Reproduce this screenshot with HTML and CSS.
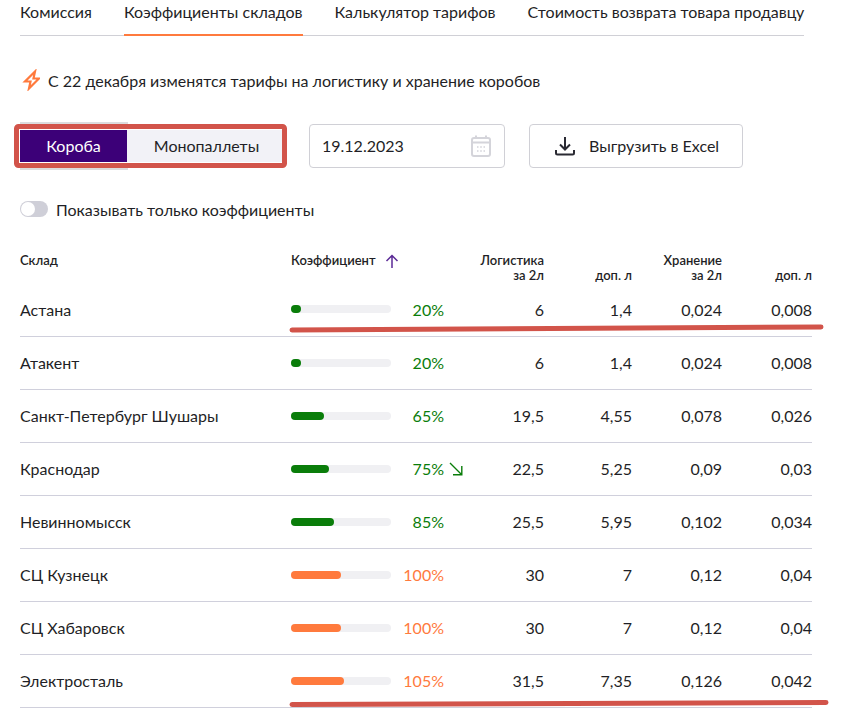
FILE: index.html
```html
<!DOCTYPE html>
<html lang="en">

<head>
    <meta charset="UTF-8" />
    <title>Коэффициенты складов</title>
    <link rel="stylesheet" href="styles.css">
</head>

<body>
    <div class="page">
        <div class="tabs">
            <a class="tab">Комиссия</a>
            <a class="tab tab-active">Коэффициенты складов</a>
            <a class="tab">Калькулятор тарифов</a>
            <a class="tab">Стоимость возврата товара продавцу</a>
        </div>

        <div class="notice">
            <svg class="notice-icon" width="20" height="22" viewBox="0 0 20 22" fill="none" stroke="#ff7a3d" stroke-width="2.2" stroke-linejoin="miter">
                <path d="M15 2.5 L5 12.5 H10.5 L9 19.5 L19 9.5 H13.5 Z" />
            </svg>
            <span>С 22 декабря изменятся тарифы на логистику и хранение коробов</span>
        </div>

        <div class="controls">
            <div class="switcher">
                <button class="switch-btn switch-active">Короба</button>
                <button class="switch-btn switch-idle">Монопаллеты</button>
            </div>
            <div class="date-field">
                <span>19.12.2023</span>
                <svg width="20" height="22" viewBox="0 0 20 22" fill="none" stroke="#d4d4da" stroke-width="2">
                    <rect x="1" y="3" width="18" height="18" rx="2" />
                    <path d="M1 7.5 H19 M5 0.5 V4 M15 0.5 V4" />
                    <path d="M6 12 H7.5 M9.2 12 H10.8 M12.5 12 H14 M6 16 H7.5 M9.2 16 H10.8 M12.5 16 H14" stroke-width="1.4" />
                </svg>
            </div>
            <button class="excel-btn">
                <svg width="20" height="20" viewBox="0 0 20 20" fill="none" stroke="#2a2a33" stroke-width="2">
                    <path d="M10 1 V13 M5 8.5 L10 13.5 L15 8.5" />
                    <path d="M1 14 V17 Q1 18.5 2.5 18.5 H17.5 Q19 18.5 19 17 V14" />
                </svg>
                <span>Выгрузить в Excel</span>
            </button>
        </div>

        <div class="toggle-row">
            <span class="toggle"><span class="toggle-knob"></span></span>
            <span>Показывать только коэффициенты</span>
        </div>

        <table class="rates">
            <colgroup>
                <col class="col-name">
                <col class="col-rate">
                <col class="col-log">
                <col class="col-extra">
                <col class="col-num">
                <col class="col-num">
            </colgroup>
            <thead>
                <tr>
                    <th class="left">Склад</th>
                    <th class="left">
                        <span class="sort-head">Коэффициент
                            <svg width="14" height="14" viewBox="0 0 14 14" fill="none" stroke="#5b2a96" stroke-width="1.5">
                                <path d="M7 14 V1.5 M1.5 7 L7 1.5 L12.5 7" />
                            </svg>
                        </span>
                    </th>
                    <th>Логистика<br>за 2л</th>
                    <th><br>доп. л</th>
                    <th>Хранение<br>за 2л</th>
                    <th><br>доп. л</th>
                </tr>
            </thead>
            <tbody id="rows"></tbody>
        </table>

        <!-- red marker strokes drawn on top of the screenshot -->
        <svg class="marks" width="853" height="710" viewBox="0 0 853 710" fill="none" stroke="#d2544a" stroke-linecap="round">
            <path d="M20 123 H128 M20 169 H128" stroke="#dcdcde" stroke-width="2" stroke-linecap="butt" />
            <rect x="16.5" y="126.5" width="268" height="39" rx="2" stroke-width="5" />
            <path d="M292 330 L821 327" stroke-width="5" />
            <path d="M292 704.5 L826 702.5" stroke-width="5" />
        </svg>
    </div>

    <script>
        const rows = [
            ["Астана", 10, 20, "6", "1,4", "0,024", "0,008"],
            ["Атакент", 10, 20, "6", "1,4", "0,024", "0,008"],
            ["Санкт-Петербург Шушары", 33, 65, "19,5", "4,55", "0,078", "0,026"],
            ["Краснодар", 38, 75, "22,5", "5,25", "0,09", "0,03"],
            ["Невинномысск", 43, 85, "25,5", "5,95", "0,102", "0,034"],
            ["СЦ Кузнецк", 50, 100, "30", "7", "0,12", "0,04"],
            ["СЦ Хабаровск", 50, 100, "30", "7", "0,12", "0,04"],
            ["Электросталь", 53, 105, "31,5", "7,35", "0,126", "0,042"]
        ];

        const arrow = `<svg class="trend" width="14" height="14" viewBox="0 0 14 14" fill="none" stroke="#0a7d0a" stroke-width="1.4"><path d="M1 1 L12.5 12.5 M4 12.8 H12.8 V4" /></svg>`;

        document.getElementById("rows").innerHTML = rows.map(function (r) {
            const tone = r[2] >= 100 ? "high" : "low";
            return `<tr>
                <td class="left">${r[0]}</td>
                <td class="left">
                    <div class="rate ${tone}">
                        <span class="bar"><span class="bar-fill" style="width:${r[1]}px"></span></span>
                        <span class="rate-value">${r[2]}%</span>
                        ${r[0] === "Краснодар" ? arrow : ""}
                    </div>
                </td>
                <td>${r[3]}</td>
                <td>${r[4]}</td>
                <td>${r[5]}</td>
                <td>${r[6]}</td>
            </tr>`;
        }).join("");
    </script>
</body>

</html>
```

FILE: styles.css
```css
* {
    box-sizing: border-box;
}

body {
    margin: 0;
    font-family: Lato, "Open Sans", sans-serif;
    color: #1f1f26;
    background: #fff;
}

.page {
    position: relative;
    width: 853px;
    height: 710px;
    padding-left: 20px;
    overflow: hidden;
}

.tabs {
    display: flex;
    gap: 32px;
    width: 784px;
    height: 36px;
    border-bottom: 1px solid #d0d0d6;
    font-size: 16px;
}

.tab {
    flex-shrink: 0;
    height: 36px;
    line-height: 24px;
    white-space: nowrap;
}

.tab-active {
    border-bottom: 2px solid #ff7a3d;
}

.notice {
    display: flex;
    align-items: center;
    gap: 8px;
    height: 22px;
    margin-top: 33px;
    font-size: 16px;
}

.controls {
    display: flex;
    align-items: center;
    margin-top: 33px;
    height: 44px;
}

.switcher {
    display: flex;
    width: 262px;
    height: 32px;
    margin-right: 27px;
}

.switch-btn {
    border: 0;
    padding: 0 0 1px;
    background: #f2f2f7;
    color: #1f1f26;
    font: 16px Lato, "Open Sans", sans-serif;
}

.switch-active {
    flex: 0 0 107px;
    background: #3c0078;
    color: #fff;
}

.switch-idle {
    flex: 1;
    padding-left: 4px;
}

.date-field {
    display: flex;
    align-items: center;
    justify-content: space-between;
    width: 196px;
    height: 44px;
    margin-right: 24px;
    padding: 0 13px 1px 12px;
    border: 1px solid #d0d0d6;
    border-radius: 4px;
    font-size: 16px;
}

.excel-btn {
    display: flex;
    align-items: center;
    gap: 14px;
    width: 214px;
    height: 44px;
    padding: 0 0 1px 25px;
    border: 1px solid #d0d0d6;
    border-radius: 4px;
    background: #fff;
    color: #1f1f26;
    font: 16px Lato, "Open Sans", sans-serif;
}

.toggle-row {
    display: flex;
    align-items: center;
    gap: 8px;
    height: 18px;
    margin-top: 32px;
    font-size: 16px;
}

.toggle {
    display: block;
    width: 28px;
    height: 16px;
    border-radius: 8px;
    background: #cfcfd8;
    padding: 1px;
}

.toggle-knob {
    display: block;
    width: 14px;
    height: 14px;
    border-radius: 50%;
    background: #fff;
}

.rates {
    width: 792px;
    margin-top: 33px;
    border-collapse: collapse;
    table-layout: fixed;
    font-size: 16px;
}

.col-name {
    width: 271px;
}

.col-rate {
    width: 180px;
}

.col-log {
    width: 73px;
}

.col-extra {
    width: 88px;
}

.col-num {
    width: 90px;
}

.rates th {
    height: 32px;
    padding: 2px 0 0;
    font-size: 13px;
    font-weight: 600;
    line-height: 15px;
    text-align: right;
    vertical-align: top;
}

.rates td {
    height: 53px;
    padding: 0;
    border-bottom: 1px solid #d0d0dc;
    text-align: right;
}

.rates .left {
    text-align: left;
}

.sort-head {
    display: flex;
    align-items: center;
    gap: 9px;
}

.rate {
    display: flex;
    align-items: center;
}

.bar {
    display: block;
    width: 100px;
    height: 8px;
    border-radius: 4px;
    background: #f0f0f3;
}

.bar-fill {
    display: block;
    height: 8px;
    border-radius: 4px;
}

.rate-value {
    width: 53px;
    text-align: right;
}

.low .bar-fill {
    background: #0a7d0a;
}

.low .rate-value {
    color: #0a7d0a;
}

.high .bar-fill {
    background: #ff7a3d;
}

.high .rate-value {
    color: #ff7a3d;
}

.trend {
    margin-left: 5px;
}

.marks {
    position: absolute;
    left: 0;
    top: 0;
    pointer-events: none;
}
```
